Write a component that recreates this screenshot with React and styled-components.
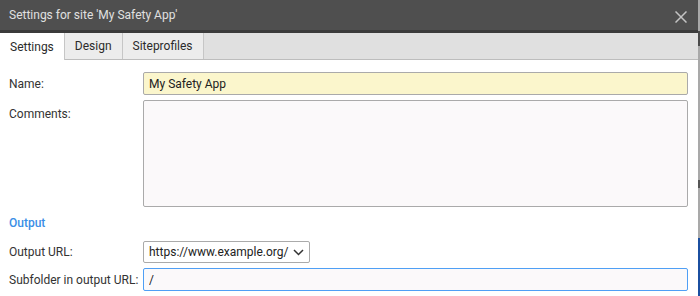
import React from "react";
import styled, { createGlobalStyle } from "styled-components";

const Global = createGlobalStyle`
  html, body {
    margin: 0;
    padding: 0;
    background: #ffffff;
    font-family: Roboto, "Liberation Sans", sans-serif;
  }
`;

const Page = styled.div`
  display: flex;
  width: 700px;
  height: 296px;
  overflow: hidden;
`;

const Dialog = styled.div`
  flex: 1;
  display: flex;
  flex-direction: column;
  background: #fff;
`;

const Scroll = styled.div`
  flex-shrink: 0;
  width: 2px;
  display: flex;
  flex-direction: column;
  background: #a9a9a9;
`;

const ScrollMark = styled.div`
  flex-shrink: 0;
  height: ${(p) => p.$h}px;
  margin-top: ${(p) => p.$top}px;
  background: ${(p) => p.$color};
`;

const TitleBar = styled.div`
  flex-shrink: 0;
  height: 30px;
  display: flex;
  align-items: center;
  justify-content: space-between;
  padding: 0 11px 0 9px;
  background: #4f4f4f;
  border-bottom: 3px solid #3b3b3b;
  color: #e0e0e0;
  font-size: 12px;
`;

const Close = styled.button`
  border: none;
  background: none;
  padding: 0;
  display: flex;
  margin-top: 4px;
  cursor: pointer;
`;

const Tabs = styled.div`
  flex-shrink: 0;
  display: flex;
  height: 26px;
  background: #e0e0e0;
  border-bottom: 1px solid #bdbdbd;
`;

const Tab = styled.div`
  display: flex;
  align-items: center;
  padding: 0 10px;
  font-size: 12px;
  color: #2b2b2b;
  background: ${(p) => (p.$active ? "#ffffff" : "#ececec")};
  border-right: 1px solid #c6c6c6;
  margin-bottom: ${(p) => (p.$active ? "-1px" : "0")};
`;

const Body = styled.div`
  flex-shrink: 0;
  display: flex;
  flex-direction: column;
  padding: 12px 10px 0 9px;
  gap: 5px;
`;

const Row = styled.div`
  display: grid;
  grid-template-columns: 134px 1fr;
  align-items: ${(p) => (p.$top ? "start" : "center")};
`;

const Label = styled.label`
  font-size: 12px;
  color: #333;
  white-space: nowrap;
  padding-top: ${(p) => (p.$top ? "7px" : "0")};
`;

const Input = styled.input`
  box-sizing: border-box;
  height: 23px;
  width: 100%;
  margin: 0;
  padding: 0 5px;
  font-family: inherit;
  font-size: 12px;
  color: #222;
  background: ${(p) => p.$bg || "#fbf9fa"};
  border: 1px solid #aaaaaa;
  border-radius: 2px;
  outline: none;

  &.focused {
    border-color: #4f9ff5;
  }
`;

const TextArea = styled.textarea`
  box-sizing: border-box;
  display: block;
  height: 107px;
  width: 100%;
  margin: 0;
  resize: none;
  background: #fbf9fa;
  border: 1px solid #aaaaaa;
  border-radius: 2px;
  outline: none;
`;

const Section = styled.div`
  margin: 4px 0 5px;
  line-height: 15px;
  font-size: 12px;
  font-weight: 500;
  color: #3a8ee6;
`;

const Select = styled.div`
  box-sizing: border-box;
  width: 167px;
  height: 22px;
  display: flex;
  align-items: center;
  justify-content: space-between;
  padding: 0 5px;
  font-size: 12px;
  color: #222;
  background: #fff;
  border: 1px solid #aaaaaa;
  border-radius: 2px;
`;

export default function App() {
  return (
    <Page>
      <Global />
      <Dialog>
        <TitleBar>
          <span>Settings for site 'My Safety App'</span>
          <Close>
            <svg width="12" height="12" viewBox="0 0 12 12">
              <path d="M0.5 0.5L11.5 11.5M11.5 0.5L0.5 11.5" stroke="#c4c4c4" strokeWidth="1.5" />
            </svg>
          </Close>
        </TitleBar>
        <Tabs>
          <Tab $active>Settings</Tab>
          <Tab>Design</Tab>
          <Tab>Siteprofiles</Tab>
        </Tabs>
        <Body>
          <Row>
            <Label>Name:</Label>
            <Input $bg="#fbf6cc" defaultValue="My Safety App" />
          </Row>
          <Row $top>
            <Label $top>Comments:</Label>
            <TextArea />
          </Row>
          <Section>Output</Section>
          <Row>
            <Label>Output URL:</Label>
            <Select>
              <span>https://www.example.org/</span>
              <svg width="11" height="7" viewBox="0 0 11 7">
                <path d="M1 1L5.5 5.5L10 1" stroke="#333" strokeWidth="1.5" fill="none" />
              </svg>
            </Select>
          </Row>
          <Row>
            <Label>Subfolder in output URL:</Label>
            <Input className="focused" defaultValue="/" />
          </Row>
        </Body>
      </Dialog>
      <Scroll>
        <ScrollMark $top={31} $h={15} $color="#4a4a4a" />
        <ScrollMark $top={134} $h={8} $color="#555555" />
        <ScrollMark $top={50} $h={58} $color="#1b4fa0" />
      </Scroll>
    </Page>
  );
}
